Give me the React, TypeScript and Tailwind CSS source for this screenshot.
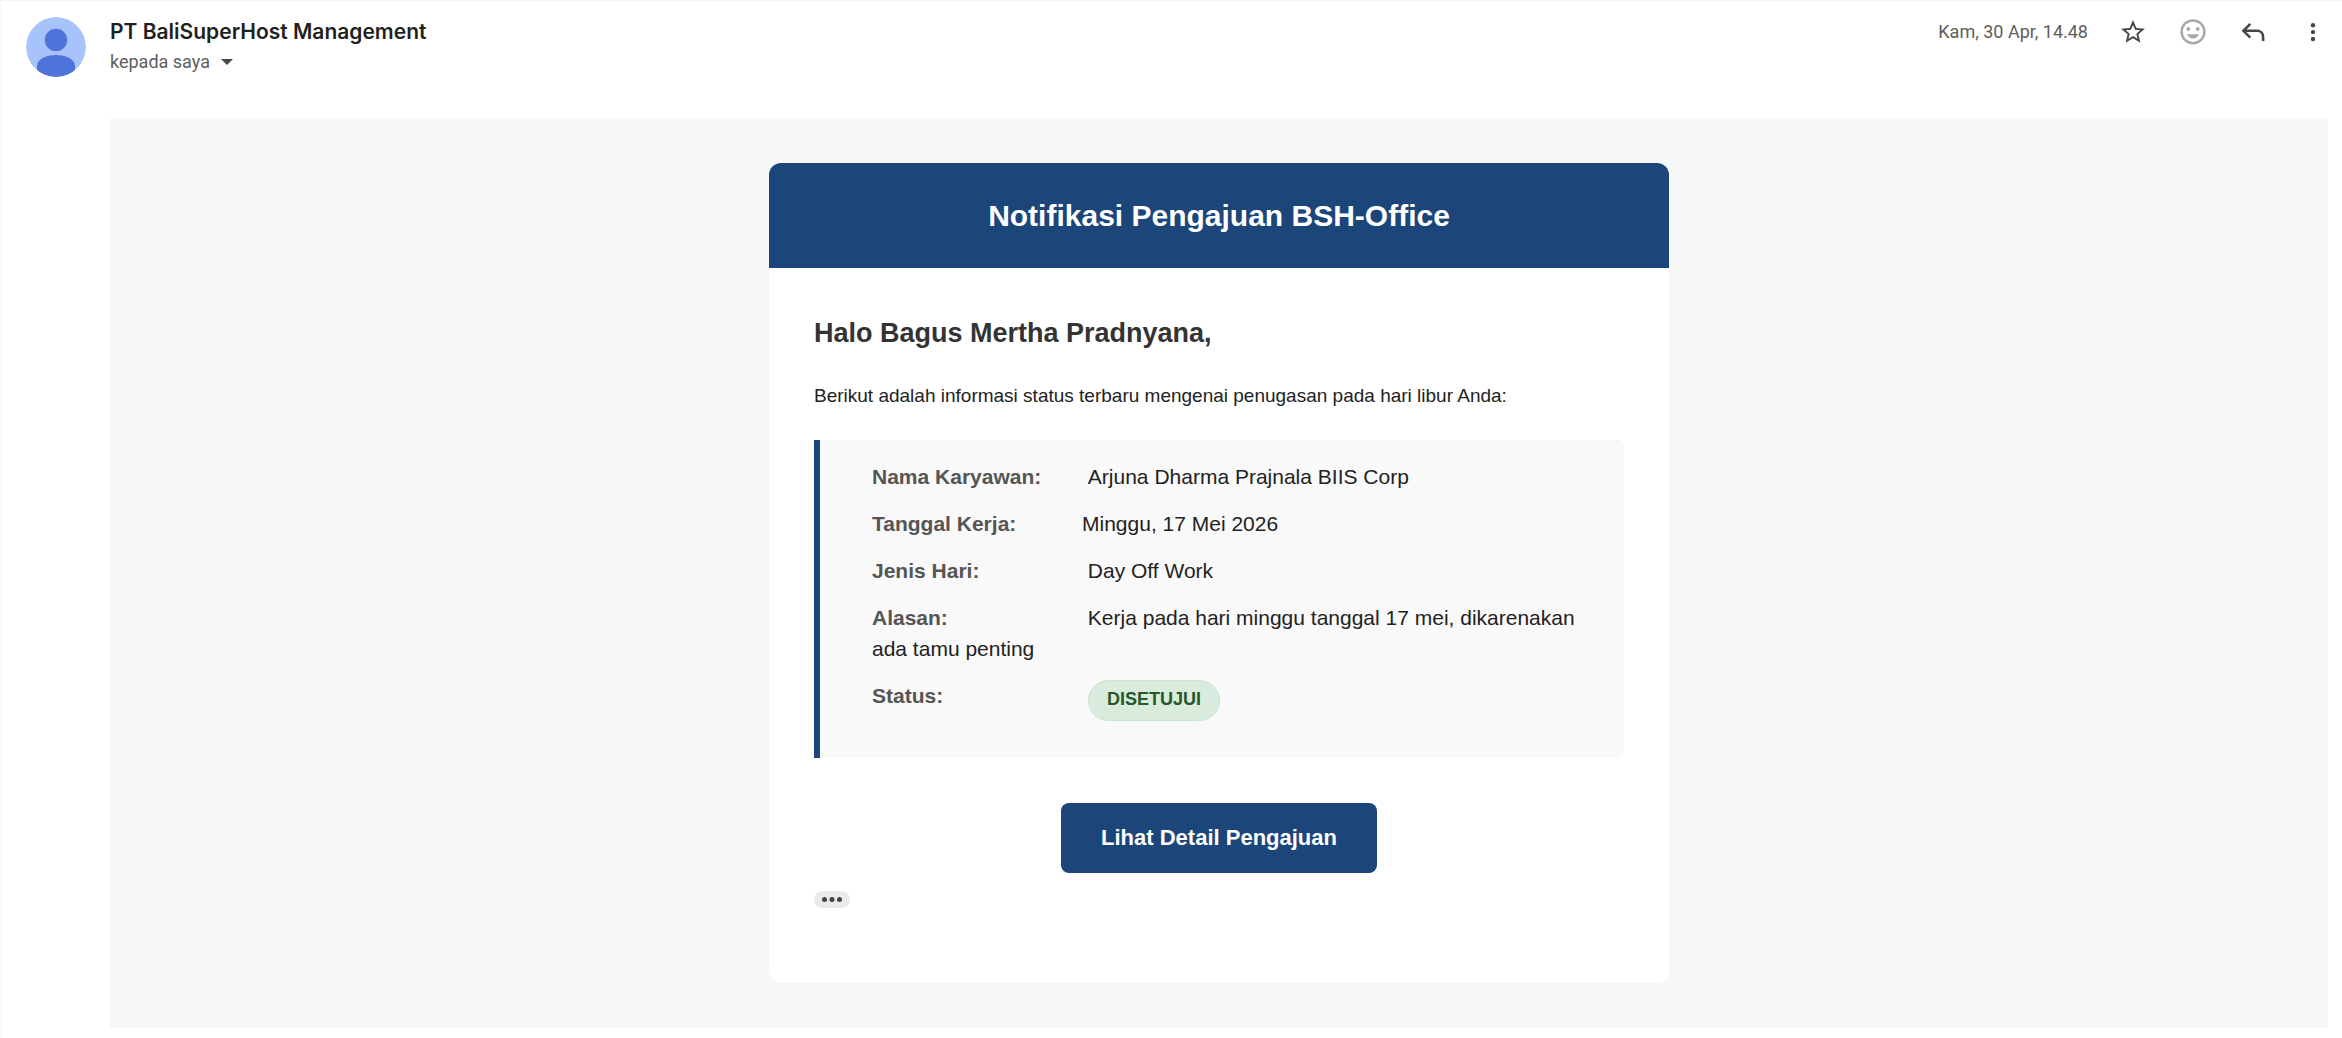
import React from "react";

type Row = { label: string; value: string; spaced: boolean };

const rows: Row[] = [
  { label: "Nama Karyawan:", value: "Arjuna Dharma Prajnala BIIS Corp", spaced: true },
  { label: "Tanggal Kerja:", value: "Minggu, 17 Mei 2026", spaced: false },
  { label: "Jenis Hari:", value: "Day Off Work", spaced: true },
  {
    label: "Alasan:",
    value: "Kerja pada hari minggu tanggal 17 mei, dikarenakan ada tamu penting",
    spaced: true,
  },
];

function Avatar() {
  return (
    <svg viewBox="0 0 60 60" className="size-[60px] shrink-0 rounded-full" aria-hidden="true">
      <defs>
        <clipPath id="avatar-clip">
          <circle cx="30" cy="30" r="30" />
        </clipPath>
      </defs>
      <g clipPath="url(#avatar-clip)">
        <rect width="60" height="60" fill="#a8c2fa" />
        <circle cx="30" cy="23" r="11.2" fill="#4f74d9" />
        <path d="M11 49.5C11 42 20 38 30 38s19 4 19 11.500V60H11z" fill="#4f74d9" />
      </g>
    </svg>
  );
}

function StarIcon() {
  return (
    <svg viewBox="-0.6 -0.6 25.2 25.2" className="size-[30px]" fill="#444746" aria-hidden="true">
      <path d="M22 9.240l-7.190-.62L12 2 9.190 8.630 2 9.240l5.460 4.730L5.820 21 12 17.270 18.180 21l-1.630-7.030L22 9.240zM12 15.400l-3.760 2.270 1-4.280-3.320-2.880 4.380-.38L12 6.100l1.710 4.040 4.380.38-3.320 2.880 1 4.280L12 15.400z" />
    </svg>
  );
}

function SmileIcon() {
  return (
    <svg viewBox="0 0 30 30" className="size-[30px]" aria-hidden="true">
      <circle cx="15" cy="14.800" r="11.400" fill="none" stroke="#a9a9a9" strokeWidth="2.500" />
      <circle cx="10.300" cy="12" r="1.900" fill="#a9a9a9" />
      <circle cx="19.700" cy="12" r="1.900" fill="#a9a9a9" />
      <path d="M9 17.200h12c-.9 2.500-3.200 4.200-6 4.200s-5.100-1.700-6-4.200z" fill="#a9a9a9" />
    </svg>
  );
}

function ReplyIcon() {
  return (
    <svg viewBox="0 0 30 30" className="size-[30px]" fill="none" stroke="#444746" strokeWidth="2.600" aria-hidden="true">
      <path d="M12.300 6.900L5.400 13.800l6.900 6.900" />
      <path d="M5.400 13.800H19c3.500 0 6.100 2.600 6.100 6.100v4" />
    </svg>
  );
}

function MoreIcon() {
  return (
    <svg viewBox="0 0 30 30" className="size-[30px]" fill="#444746" aria-hidden="true">
      <circle cx="15" cy="8.200" r="2.200" />
      <circle cx="15" cy="15.100" r="2.200" />
      <circle cx="15" cy="22" r="2.200" />
    </svg>
  );
}

const actions = [
  { label: "Beri bintang", Icon: StarIcon },
  { label: "Tambahkan reaksi", Icon: SmileIcon },
  { label: "Balas", Icon: ReplyIcon },
  { label: "Lainnya", Icon: MoreIcon },
];

function MessageHeader() {
  return (
    <header className="flex items-start gap-6 pl-6 pr-[14px] pt-4">
      <Avatar />
      <div className="flex-1">
        <h2 className="font-['Inter',sans-serif] text-[21px] leading-[30px] font-semibold text-[#1f1f1f]">
          PT BaliSuperHost Management
        </h2>
        <button
          type="button"
          className="flex items-center gap-[11px] font-['Roboto',sans-serif] text-lg leading-[30px] text-[#5e5e5e]"
        >
          kepada saya
          <svg viewBox="0 0 12 6" className="h-[6px] w-3" fill="#444746" aria-hidden="true">
            <path d="M0 0h12L6 6z" />
          </svg>
        </button>
      </div>
      <div className="flex items-center gap-[30px]">
        <time className="font-['Roboto',sans-serif] text-lg leading-[30px] text-[#5e5e5e]">
          Kam, 30 Apr, 14.48
        </time>
        {actions.map(({ label, Icon }) => (
          <button key={label} type="button" aria-label={label}>
            <Icon />
          </button>
        ))}
      </div>
    </header>
  );
}

function Details() {
  return (
    <dl className="mt-[29px] space-y-4 rounded-r-md border-l-6 border-[#1c457a] bg-[#f9f9f9] pt-[21px] pr-[30px] pb-[37px] pl-[52px] text-[21px] leading-[31px]">
      {rows.map((row) => (
        <div key={row.label}>
          <dt className="inline-block w-[210px] font-bold text-[#555555]">{row.label}</dt>
          {row.spaced ? " " : null}
          <dd className="inline">{row.value}</dd>
        </div>
      ))}
      <div className="flex items-start">
        <dt className="w-[216px] font-bold text-[#555555]">Status:</dt>
        <dd className="rounded-full border border-[#c9e5cf] bg-[#d9ebdc] px-[18px] pt-[5px] pb-[7px] text-lg leading-[27px] font-bold text-[#265829]">
          DISETUJUI
        </dd>
      </div>
    </dl>
  );
}

export default function App() {
  return (
    <main className="min-h-screen border-t border-l-2 border-t-[#f6f6f6] border-l-[#f9f9fe] bg-white">
      <MessageHeader />
      <section className="mt-[41px] mr-[14px] ml-[108px] bg-[#f5f8f7] py-[45px] font-['Liberation_Sans',Arial,sans-serif] text-[#222222]">
        <article className="mx-auto max-w-[900px] overflow-hidden rounded-xl bg-white">
          <h1 className="bg-[#1c457a] py-[30px] text-center text-3xl leading-[45px] font-bold text-white">
            Notifikasi Pengajuan BSH-Office
          </h1>
          <div className="px-[45px] pt-[45px] pb-[75px]">
            <h2 className="text-[27px] leading-10 font-bold text-[#333333]">
              Halo Bagus Mertha Pradnyana,
            </h2>
            <p className="mt-7 text-[19px] leading-[30px]">
              Berikut adalah informasi status terbaru mengenai penugasan pada hari libur Anda:
            </p>
            <Details />
            <div className="mt-[45px] flex justify-center">
              <a
                href="#detail"
                className="rounded-lg bg-[#1c457a] px-10 py-[18px] text-[22px] leading-[34px] font-bold text-white"
              >
                Lihat Detail Pengajuan
              </a>
            </div>
            <button
              type="button"
              aria-label="Tampilkan konten yang dipangkas"
              className="mt-[18px] flex h-[17px] w-9 items-center justify-center rounded-full bg-[#e8eaeb]"
            >
              <svg viewBox="0 0 20 5" className="h-[5px] w-5" fill="#444746" aria-hidden="true">
                <circle cx="2.500" cy="2.500" r="2.500" />
                <circle cx="10" cy="2.500" r="2.500" />
                <circle cx="17.500" cy="2.500" r="2.500" />
              </svg>
            </button>
          </div>
        </article>
      </section>
    </main>
  );
}
